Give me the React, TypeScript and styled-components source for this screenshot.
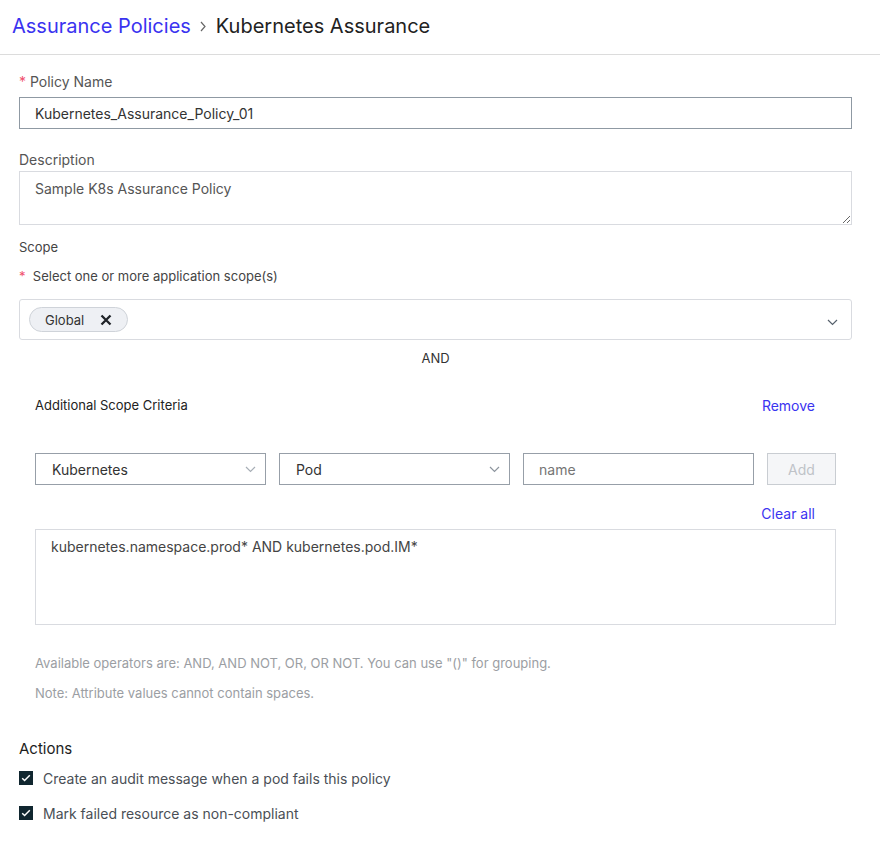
import React from 'react'
import styled, { createGlobalStyle } from 'styled-components'

const Global = createGlobalStyle`
    html, body {
        margin: 0;
        padding: 0;
        background: #ffffff;
        font-family: Inter, "Noto Sans", Arial, sans-serif;
        color: #333;
    }
    * { box-sizing: border-box; }
`

const BLUE = '#3a33f0'

function Chevron({ color = '#6b7580' }: { color?: string }) {
    return (
        <svg width="11" height="7" viewBox="0 0 11 7" fill="none">
            <path d="M1 1l4.5 4.5L10 1" stroke={color} strokeWidth="1.2" />
        </svg>
    )
}

function Check() {
    return (
        <svg width="10" height="8" viewBox="0 0 10 8" fill="none">
            <path d="M1.2 4.2l2.4 2.3L8.8 1.3" stroke="#fff" strokeWidth="1.5" />
        </svg>
    )
}

export default function App() {
    return (
        <>
            <Global />
            <Header>
                <Crumb>Assurance Policies</Crumb>
                <Sep>
                    <svg width="8" height="11" viewBox="0 0 8 11" fill="none">
                        <path d="M2 1l4 4.5L2 10" stroke="#666" strokeWidth="1.2" />
                    </svg>
                </Sep>
                <Title>Kubernetes Assurance</Title>
            </Header>

            <Body>
                <Label>
                    <Req>*</Req> Policy Name
                </Label>
                <TextInput defaultValue="Kubernetes_Assurance_Policy_01" />

                <Label $top={21} $bottom={1}>Description</Label>
                <TextArea defaultValue="Sample K8s Assurance Policy" />

                <SmallLabel $top={12}>Scope</SmallLabel>
                <SmallLabel $top={9}>
                    <Req>*</Req>&nbsp; Select one or more application scope(s)
                </SmallLabel>

                <ScopeSelect>
                    <Chip>
                        Global
                        <svg width="12" height="12" viewBox="0 0 12 12">
                            <path d="M1.5 1.5l9 9M10.5 1.5l-9 9" stroke="#1f2328" strokeWidth="2.3" />
                        </svg>
                    </Chip>
                    <Chevron color="#56616c" />
                </ScopeSelect>

                <AndText>AND</AndText>

                <Criteria>
                    <CriteriaHead>
                        <CriteriaTitle>Additional Scope Criteria</CriteriaTitle>
                        <LinkText>Remove</LinkText>
                    </CriteriaHead>

                    <FieldRow>
                        <Select>
                            Kubernetes
                            <Chevron color="#a7aeb6" />
                        </Select>
                        <Select>
                            Pod
                            <Chevron color="#8d959e" />
                        </Select>
                        <NameInput placeholder="name" />
                        <AddButton disabled>Add</AddButton>
                    </FieldRow>

                    <ClearRow>
                        <LinkText>Clear all</LinkText>
                    </ClearRow>

                    <QueryBox defaultValue="kubernetes.namespace.prod* AND kubernetes.pod.IM*" />

                    <Hint $top={28}>
                        Available operators are: AND, AND NOT, OR, OR NOT. You can use "()" for grouping.
                    </Hint>
                    <Hint $top={10}>Note: Attribute values cannot contain spaces.</Hint>
                </Criteria>

                <Actions>Actions</Actions>
                <CheckRow>
                    <Box>
                        <Check />
                    </Box>
                    Create an audit message when a pod fails this policy
                </CheckRow>
                <CheckRow>
                    <Box>
                        <Check />
                    </Box>
                    Mark failed resource as non-compliant
                </CheckRow>
            </Body>
        </>
    )
}

const Header = styled.div`
    display: flex;
    align-items: center;
    height: 55px;
    padding: 0 0 2px 12px;
    border-bottom: 1px solid #dcdcdc;
    font-size: 20px;
`

const Crumb = styled.span`
    color: ${BLUE};
`

const Sep = styled.span`
    display: flex;
    margin: 0 9px 0 8px;
`

const Title = styled.span`
    color: #222;
`

const Body = styled.div`
    display: flex;
    flex-direction: column;
    padding: 17px 28px 40px 19px;
`

const Label = styled.div<{ $top?: number; $bottom?: number }>`
    font-size: 14px;
    line-height: 20px;
    color: #555;
    margin-top: ${p => p.$top ?? 0}px;
    margin-bottom: ${p => p.$bottom ?? 5}px;
`

const SmallLabel = styled.div<{ $top?: number }>`
    font-size: 13px;
    line-height: 20px;
    color: #444;
    margin-top: ${p => p.$top ?? 0}px;
`

const Req = styled.span`
    color: #f0506e;
`

const TextInput = styled.input`
    height: 32px;
    width: 100%;
    border: 1px solid #8f99a3;
    border-radius: 0;
    padding: 0 15px;
    font-family: inherit;
    font-size: 14px;
    color: #333;
    outline: none;
`

const TextArea = styled.textarea`
    height: 54px;
    width: 100%;
    border: 1px solid #d9dbe0;
    padding: 7px 15px;
    font-family: inherit;
    font-size: 14px;
    line-height: 20px;
    color: #555;
    outline: none;
`

const ScopeSelect = styled.div`
    display: flex;
    align-items: center;
    justify-content: space-between;
    height: 41px;
    margin-top: 13px;
    padding: 0 13px 0 9px;
    border: 1px solid #d9dbe0;
    border-radius: 3px;

    > svg {
        margin-top: 6px;
    }
`

const Chip = styled.div`
    display: flex;
    align-items: center;
    gap: 16px;
    height: 25px;
    padding: 0 15px;
    background: #eef0f4;
    border: 1px solid #cfd3d9;
    border-radius: 13px;
    font-size: 13px;
    color: #333;
`

const AndText = styled.div`
    margin-top: 8px;
    text-align: center;
    font-size: 13px;
    line-height: 20px;
    color: #333;
`

const Criteria = styled.div`
    display: flex;
    flex-direction: column;
    padding: 0 16px;
`

const CriteriaHead = styled.div`
    display: flex;
    justify-content: space-between;
    align-items: center;
    margin-top: 27px;
    padding-right: 21px;
    height: 20px;
`

const CriteriaTitle = styled.span`
    font-size: 13px;
    color: #222;
`

const LinkText = styled.span`
    font-size: 14px;
    color: ${BLUE};
    cursor: pointer;
`

const FieldRow = styled.div`
    display: grid;
    grid-template-columns: minmax(0, 1fr) minmax(0, 1fr) minmax(0, 1fr) 69px;
    gap: 13px;
    margin-top: 38px;
    height: 32px;
`

const Select = styled.div`
    display: flex;
    align-items: center;
    justify-content: space-between;
    padding: 0 9px 0 16px;
    border: 1px solid #979fa8;
    font-size: 14px;
    color: #333;
`

const NameInput = styled.input`
    width: 100%;
    min-width: 0;
    border: 1px solid #979fa8;
    padding: 0 15px;
    font-family: inherit;
    font-size: 14px;
    outline: none;

    ::placeholder {
        color: #a9adb3;
    }
`

const AddButton = styled.button`
    background: #f5f6f8;
    border: 1px solid #c9cdd2;
    border-radius: 0;
    font-family: inherit;
    font-size: 14px;
    color: #bfc3c8;
`

const ClearRow = styled.div`
    display: flex;
    justify-content: flex-end;
    padding-right: 21px;
    margin-top: 18px;
    height: 20px;
    align-items: center;
`

const QueryBox = styled.textarea`
    height: 96px;
    width: 100%;
    margin-top: 6px;
    border: 1px solid #d9dbe0;
    padding: 7px 15px;
    font-family: inherit;
    font-size: 14px;
    line-height: 20px;
    color: #444;
    resize: none;
    outline: none;
`

const Hint = styled.div<{ $top: number }>`
    margin-top: ${p => p.$top}px;
    font-size: 13px;
    line-height: 20px;
    color: #9b9ea3;
`

const Actions = styled.div`
    margin-top: 36px;
    font-size: 15px;
    line-height: 20px;
    color: #1d1d1d;
`

const CheckRow = styled.div`
    display: flex;
    align-items: center;
    gap: 10px;
    margin-top: 9px;
    height: 20px;
    font-size: 14px;
    color: #4a4f56;

    & + & {
        margin-top: 15px;
    }
`

const Box = styled.span`
    display: flex;
    align-items: center;
    justify-content: center;
    width: 14px;
    height: 14px;
    background: #10262f;
`
